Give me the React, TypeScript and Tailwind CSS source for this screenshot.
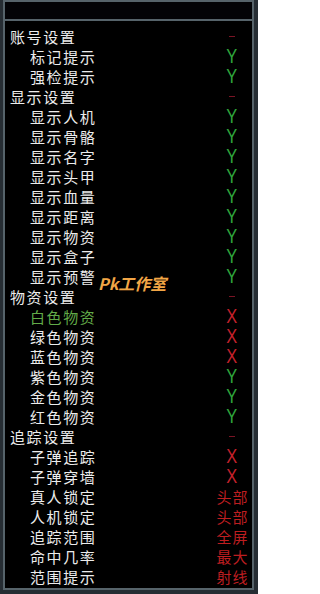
type Row = {
  label: string;
  value: string;
  header?: boolean;
  active?: boolean;
};

const rows: Row[] = [
  { label: '账号设置', value: '-', header: true },
  { label: '标记提示', value: 'Y' },
  { label: '强检提示', value: 'Y' },
  { label: '显示设置', value: '-', header: true },
  { label: '显示人机', value: 'Y' },
  { label: '显示骨骼', value: 'Y' },
  { label: '显示名字', value: 'Y' },
  { label: '显示头甲', value: 'Y' },
  { label: '显示血量', value: 'Y' },
  { label: '显示距离', value: 'Y' },
  { label: '显示物资', value: 'Y' },
  { label: '显示盒子', value: 'Y' },
  { label: '显示预警', value: 'Y' },
  { label: '物资设置', value: '-', header: true },
  { label: '白色物资', value: 'X', active: true },
  { label: '绿色物资', value: 'X' },
  { label: '蓝色物资', value: 'X' },
  { label: '紫色物资', value: 'Y' },
  { label: '金色物资', value: 'Y' },
  { label: '红色物资', value: 'Y' },
  { label: '追踪设置', value: '-', header: true },
  { label: '子弹追踪', value: 'X' },
  { label: '子弹穿墙', value: 'X' },
  { label: '真人锁定', value: '头部' },
  { label: '人机锁定', value: '头部' },
  { label: '追踪范围', value: '全屏' },
  { label: '命中几率', value: '最大' },
  { label: '范围提示', value: '射线' },
];

function Value({ v }: { v: string }) {
  if (v === '-') {
    return <span className="block w-[6px] h-[1px] bg-[#7a1424] mt-[1px]" />;
  }
  if (v === 'Y') {
    return <span className="text-[20px] leading-none text-[#2fa53c] [font-family:'Liberation_Sans',sans-serif] scale-x-[0.82] inline-block">Y</span>;
  }
  if (v === 'X') {
    return <span className="text-[20px] leading-none text-[#c4212b] [font-family:'Liberation_Sans',sans-serif] scale-x-[0.82] inline-block">X</span>;
  }
  return <span className="text-[15px] leading-none tracking-[1px] mr-[-1px] text-[#bd1e20]">{v}</span>;
}

export default function App() {
  return (
    <div className="w-[258px] h-[594px] bg-[#262d33] pl-[3px] overflow-hidden [font-family:'Noto_Sans_CJK_SC',sans-serif]">
      <div className="relative w-[251px] h-[590px] border-2 border-[#56636a] bg-black flex flex-col">
        <div className="h-[19px] border-b-2 border-[#56636a] bg-[#030306]" />
        <ul className="flex flex-col pt-[5px] m-0 p-0 list-none">
          {rows.map((r) => (
            <li key={r.label} className="h-5 flex items-center pr-[4px]">
              <span
                className={`flex-1 text-[15px] leading-none tracking-[1.6px] ${r.header ? 'pl-[5px]' : 'pl-[25px]'} ${
                  r.active ? 'text-[#62ab48]' : 'text-[#ececec]'
                }`}
              >
                {r.label}
              </span>
              <span className="w-8 flex justify-center items-center">
                <Value v={r.value} />
              </span>
            </li>
          ))}
        </ul>
        <span className="absolute left-[93px] top-[273px] text-[16px] font-bold italic leading-none text-[#f2a646]">
          Pk工作室
        </span>
      </div>
    </div>
  );
}
